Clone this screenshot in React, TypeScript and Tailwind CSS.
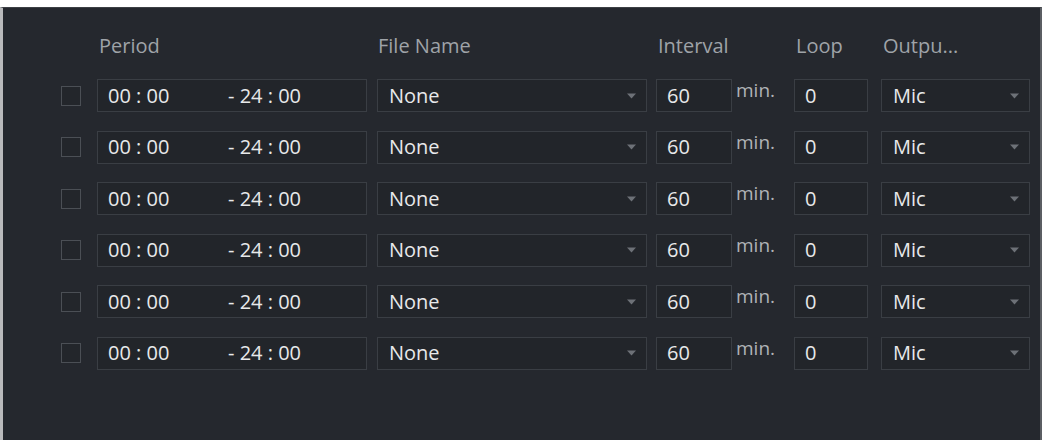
const rows = [0, 1, 2, 3, 4, 5];

function Arrow() {
  return (
    <svg width="9" height="6" viewBox="0 0 9 6" className="shrink-0">
      <path d="M0 0.5 L9 0.5 L4.5 5.5 Z" fill="#6d7177" />
    </svg>
  );
}

function ScheduleRow() {
  return (
    <div className="flex h-[33px] items-center">
      <div className="h-[20px] w-[20px] border-[1.5px] border-[#4b4f55] bg-[#23262b]" />
      <div className="ml-[16px] flex h-full w-[270px] items-center border border-[#3a3e44] bg-[#22252a] pl-[10px] text-[20px] font-medium text-[#e8e9ea]">
        <span className="w-[120px]">00 : 00</span>
        <span>- 24 : 00</span>
      </div>
      <div className="ml-[10px] flex h-full w-[270px] items-center justify-between border border-[#3a3e44] bg-[#22252a] pl-[11px] pr-[10px] text-[20px] font-medium text-[#e8e9ea]">
        <span>None</span>
        <Arrow />
      </div>
      <div className="ml-[9px] flex h-full w-[76px] items-center border border-[#3a3e44] bg-[#22252a] pl-[10px] text-[20px] font-medium text-[#e8e9ea]">
        60
      </div>
      <div className="h-full w-[62px] pl-[4px] text-[19px] leading-[22px] text-[#b0b3b7]">min.</div>
      <div className="flex h-full w-[74px] items-center border border-[#3a3e44] bg-[#22252a] pl-[10px] text-[20px] font-medium text-[#e8e9ea]">
        0
      </div>
      <div className="ml-[13px] flex h-full w-[149px] items-center justify-between border border-[#3a3e44] bg-[#22252a] pl-[11px] pr-[10px] text-[20px] font-medium text-[#e8e9ea]">
        <span>Mic</span>
        <Arrow />
      </div>
    </div>
  );
}

export default function App() {
  return (
    <div
      className="relative h-[440px] w-[1042px] overflow-hidden bg-white pt-[7px]"
      style={{ fontFamily: '"Open Sans", "Noto Sans", sans-serif' }}
    >
      <div className="h-[433px] border-l-[3px] border-r-2 border-t border-l-[#b9babc] border-r-[#5b5e63] border-t-[#3d4045] bg-[#25282e] pl-[58px]">
        <div className="mt-[23px] flex h-[30px] items-center text-[20px] leading-[30px] text-[#9fa3a8]">
          <span className="ml-[38px] w-[279px]">Period</span>
          <span className="w-[280px]">File Name</span>
          <span className="w-[138px]">Interval</span>
          <span className="w-[87px]">Loop</span>
          <span>Outpu...</span>
        </div>
        <div className="mt-[18px] flex flex-col gap-y-[18.6px]">
          {rows.map((r) => (
            <ScheduleRow key={r} />
          ))}
        </div>
      </div>
    </div>
  );
}
